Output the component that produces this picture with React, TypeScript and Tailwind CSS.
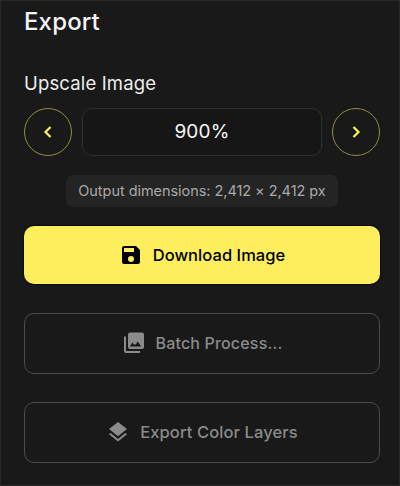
import type { ReactNode } from "react";

function SaveIcon() {
  return (
    <svg className="h-6 w-6 shrink-0" viewBox="0 0 24 24" fill="currentColor">
      <path d="M17 3H5a2 2 0 0 0-2 2v14a2 2 0 0 0 2 2h14a2 2 0 0 0 2-2V7l-4-4zm-5 16a3 3 0 1 1 0-6 3 3 0 0 1 0 6zm3-10H5V5h10v4z" />
    </svg>
  );
}

function PhotosIcon() {
  return (
    <svg className="h-6 w-6 shrink-0" viewBox="0 0 24 24" fill="currentColor">
      <path d="M22 16V3.500a2 2 0 0 0-2-2H8a2 2 0 0 0-2 2V16a2 2 0 0 0 2 2h12a2 2 0 0 0 2-2zM7.800 15.500l2.600-3.900 1.500 2.200 .9-.8 .8 .8 2.100-3.200 3.600 4.900zM2 5.500V20a2 2 0 0 0 2 2h14v-2H4V5.500z" />
    </svg>
  );
}

function LayersIcon() {
  return (
    <svg className="h-6 w-6 shrink-0" viewBox="0 0 24 24" fill="currentColor">
      <path d="M11.99 18.94l-7.37-5.93L3 14.27l9 7.200 9-7.200-1.63-1.27zM12 16.300l7.360-5.93L21 9.100l-9-7-9 7 1.63 1.27z" />
    </svg>
  );
}

function StepButton({ label, points }: { label: string; points: string }) {
  return (
    <button aria-label={label} className="flex h-12 w-12 shrink-0 items-center justify-center rounded-full border border-[#918a42] text-[#fcee5c]">
      <svg className="h-6 w-6" viewBox="0 0 24 24" fill="none" stroke="currentColor" strokeWidth="2.2">
        <polyline points={points} />
      </svg>
    </button>
  );
}

function OutlineButton({ icon, children }: { icon: ReactNode; children: ReactNode }) {
  return (
    <button className="flex h-[61px] w-full items-center justify-center rounded-[10px] border border-[#4b4b4b] pb-0.5 text-base font-medium text-[#8b8b8b]">
      {icon}
      {children}
    </button>
  );
}

export default function App() {
  return (
    <main className="h-[486px] w-[400px] border border-[#292929] bg-[#191919] px-[23px] font-['Inter','Liberation_Sans',sans-serif] whitespace-nowrap">
      <h1 className="mt-[5px] h-8 text-[24px] leading-8 font-medium tracking-[0.15px] text-[#f4f4f4]">Export</h1>
      <h2 className="mt-[33px] h-6 text-[18.5px] leading-6 tracking-[0.15px] text-[#ededed]">Upscale Image</h2>
      <div className="mt-[13px] flex w-[356px] items-center justify-between">
        <StepButton label="Decrease" points="14.5,7 9.5,12 14.5,17" />
        <div className="flex h-12 w-60 items-center justify-center rounded-[10px] border border-[#303030] bg-[#161616] text-[19px] tracking-[0.2px] text-[#f7f7f7]">
          <span>900%</span>
        </div>
        <StepButton label="Increase" points="9.5,7 14.5,12 9.5,17" />
      </div>
      <div className="mt-[19px] flex w-[356px] justify-center">
        <div className="flex h-8 w-[272px] items-center justify-center rounded-[7px] bg-[#242424] text-[14.5px] tracking-[-0.05px] text-[#a9a9a9]">
          <span>Output dimensions: 2,412 × 2,412 px</span>
        </div>
      </div>
      <button className="mt-[19px] flex h-[58px] w-[356px] items-center justify-center rounded-[10px] bg-[#fcee5c] text-[16.5px] font-medium tracking-[0.05px] text-black shadow-[0_0_1px_1px_#0c0c0f]">
        <SaveIcon />
        <span className="ml-2.5">Download Image</span>
      </button>
      <div className="mt-[29px] flex w-[356px] flex-col gap-[28px]">
        <OutlineButton icon={<PhotosIcon />}>
          <span className="ml-2.5 tracking-[0.17px]">Batch Process...</span>
        </OutlineButton>
        <OutlineButton icon={<LayersIcon />}>
          <span className="ml-2.5 pt-px text-[16.5px] tracking-[0.11px]">Export Color Layers</span>
        </OutlineButton>
      </div>
    </main>
  );
}
